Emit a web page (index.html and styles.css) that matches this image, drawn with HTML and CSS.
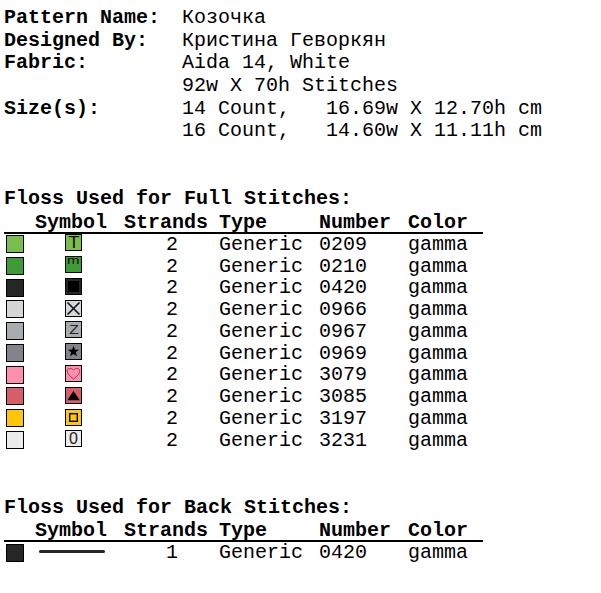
FILE: index.html
```html
<!DOCTYPE html>
<html>
<head>
<meta charset="utf-8">
<link rel="stylesheet" href="styles.css">
</head>
<body>
<div class="page">
  <div class="info">
    <div class="lbl">Pattern Name:</div><div class="val">Козочка</div>
    <div class="lbl">Designed By:</div><div class="val">Кристина Геворкян</div>
    <div class="lbl">Fabric:</div><div class="val">Aida 14, White</div>
    <div class="lbl"></div><div class="val">92w X 70h Stitches</div>
    <div class="lbl">Size(s):</div><div class="val">14 Count,   16.69w X 12.70h cm</div>
    <div class="lbl"></div><div class="val">16 Count,   14.60w X 11.11h cm</div>
  </div>

  <div class="title title-full">Floss Used for Full Stitches:</div>
  <div class="floss">
    <div class="row head"><div></div><div class="c-sym">Symbol</div><div>Strands</div><div>Type</div><div>Number</div><div>Color</div></div>

    <div class="row"><div class="c-sw"><span class="sw c0209"></span></div><div class="c-sym"><div class="box c0209"><span class="g g-t">T</span></div></div><div class="c-num">2</div><div>Generic</div><div>0209</div><div>gamma</div></div>

    <div class="row"><div class="c-sw"><span class="sw c0210"></span></div><div class="c-sym"><div class="box box-top c0210"><span class="g g-m">m</span></div></div><div class="c-num">2</div><div>Generic</div><div>0210</div><div>gamma</div></div>

    <div class="row"><div class="c-sw"><span class="sw c0420"></span></div><div class="c-sym"><div class="box c0420"><svg width="15" height="15" viewBox="0 0 15 15"><rect x="2" y="2" width="11" height="11" fill="#000"/></svg></div></div><div class="c-num">2</div><div>Generic</div><div>0420</div><div>gamma</div></div>

    <div class="row"><div class="c-sw"><span class="sw c0966"></span></div><div class="c-sym"><div class="box c0966"><svg width="15" height="15" viewBox="0 0 15 15"><path d="M1.5 1.5 L13.5 13.5 M13.5 1.5 L1.5 13.5" stroke="#111" stroke-width="1.6" fill="none"/></svg></div></div><div class="c-num">2</div><div>Generic</div><div>0966</div><div>gamma</div></div>

    <div class="row"><div class="c-sw"><span class="sw c0967"></span></div><div class="c-sym"><div class="box c0967"><span class="g g-z">Z</span></div></div><div class="c-num">2</div><div>Generic</div><div>0967</div><div>gamma</div></div>

    <div class="row"><div class="c-sw"><span class="sw c0969"></span></div><div class="c-sym"><div class="box c0969"><svg width="15" height="15" viewBox="0 0 15 15"><polygon points="7.5,1.8 8.9,5.6 13,5.7 9.8,8.2 11,12.2 7.5,9.9 4,12.2 5.2,8.2 2,5.7 6.1,5.6" fill="#000"/></svg></div></div><div class="c-num">2</div><div>Generic</div><div>0969</div><div>gamma</div></div>

    <div class="row"><div class="c-sw"><span class="sw c3079"></span></div><div class="c-sym"><div class="box c3079"><svg width="15" height="15" viewBox="0 0 15 15"><path d="M7.5 13 C3.5 10 1 7.5 1.3 4.6 C1.6 2.2 5.5 1.4 7.5 4.2 C9.5 1.4 13.4 2.2 13.7 4.6 C14 7.5 11.5 10 7.5 13 Z" fill="none" stroke="#a8324a" stroke-width="1"/></svg></div></div><div class="c-num">2</div><div>Generic</div><div>3079</div><div>gamma</div></div>

    <div class="row"><div class="c-sw"><span class="sw c3085"></span></div><div class="c-sym"><div class="box c3085"><svg width="15" height="15" viewBox="0 0 15 15"><polygon points="7.5,3 13.8,12.3 1.2,12.3" fill="#000"/></svg></div></div><div class="c-num">2</div><div>Generic</div><div>3085</div><div>gamma</div></div>

    <div class="row"><div class="c-sw"><span class="sw c3197"></span></div><div class="c-sym"><div class="box c3197"><svg width="15" height="15" viewBox="0 0 15 15"><rect x="3.7" y="3.7" width="7.6" height="7.6" fill="none" stroke="#000" stroke-width="1.4"/></svg></div></div><div class="c-num">2</div><div>Generic</div><div>3197</div><div>gamma</div></div>

    <div class="row"><div class="c-sw"><span class="sw c3231"></span></div><div class="c-sym"><div class="box c3231"><span class="g g-o">0</span></div></div><div class="c-num">2</div><div>Generic</div><div>3231</div><div>gamma</div></div>
  </div>

  <div class="title title-back">Floss Used for Back Stitches:</div>
  <div class="floss">
    <div class="row head head-back"><div></div><div class="c-sym">Symbol</div><div>Strands</div><div>Type</div><div>Number</div><div>Color</div></div>
    <div class="row"><div class="c-sw"><span class="sw sw-back c0420"></span></div><div class="c-sym"><span class="bline"></span></div><div class="c-num">1</div><div>Generic</div><div>0420</div><div>gamma</div></div>
  </div>
</div>
</body>
</html>
```

FILE: styles.css
```css
html, body {
  margin: 0;
  padding: 0;
  background: #ffffff;
}

body {
  font-family: "Liberation Mono", "Courier New", monospace;
  font-size: 20px;
  color: #000000;
}

.page {
  padding: 7px 0 0 4px;
}

.info {
  display: grid;
  grid-template-columns: 178px auto;
  line-height: 22.66px;
}

.lbl {
  font-weight: bold;
}

.val {
  white-space: pre;
}

.title {
  font-weight: bold;
  line-height: 22.66px;
}

.title-full {
  margin-top: 44.7px;
}

.title-back {
  margin-top: 46px;
}

.floss {
  width: 479px;
}

.row {
  display: grid;
  grid-template-columns: 30px 90px 95px 100px 89px 75px;
  height: 21.78px;
  line-height: 21.78px;
  white-space: pre;
}

.head {
  font-weight: bold;
  border-bottom: 2px solid #000;
  box-sizing: content-box;
  height: 19.78px;
  padding-top: 2px;
  margin-top: -0.26px;
}

.head-back {
  margin-top: -2px;
}

.head .c-sym {
  padding-left: 1px;
}

.c-num {
  padding-left: 42px;
}

.c-sw {
  display: flex;
  align-items: flex-start;
}

.sw {
  display: block;
  box-sizing: border-box;
  width: 18px;
  height: 18px;
  border: 1px solid #000;
  margin: 1.2px 0 0 2px;
}

.sw-back {
  margin-top: 2px;
}

.box {
  box-sizing: border-box;
  width: 17px;
  height: 17px;
  border: 1px solid #000;
  margin: 0.6px 0 0 31px;
  display: flex;
  align-items: center;
  justify-content: center;
  overflow: visible;
}

.box svg {
  display: block;
}

.box-top {
  align-items: flex-start;
}

.g {
  font-family: "Liberation Sans", Arial, sans-serif;
  color: #111;
  display: block;
}

.g-t {
  font-size: 16px;
  line-height: 14px;
  transform: scaleX(1.15);
  padding-top: 1px;
}

.g-m {
  font-size: 10px;
  line-height: 6px;
  padding-top: 1px;
  transform: scaleX(1.5);
}

.g-z {
  font-size: 13px;
  line-height: 13px;
  color: #222;
  transform: scaleX(1.2);
}

.g-o {
  font-size: 16px;
  line-height: 14px;
  color: #222;
  padding-top: 1px;
}

.bline {
  display: block;
  width: 66px;
  height: 3px;
  border-radius: 1.5px;
  background: #262626;
  margin: 8px 0 0 5px;
}

.c0209 { background: #7abf4c; }
.c0210 { background: #3f9b35; }
.c0420 { background: #262626; }
.c0966 { background: #d4d6d8; }
.c0967 { background: #a9acaf; }
.c0969 { background: #81858b; }
.c3079 { background: #ff8fac; }
.c3085 { background: #d75e68; }
.c3197 { background: #ffc60b; }
.c3231 { background: #ececec; }
```
